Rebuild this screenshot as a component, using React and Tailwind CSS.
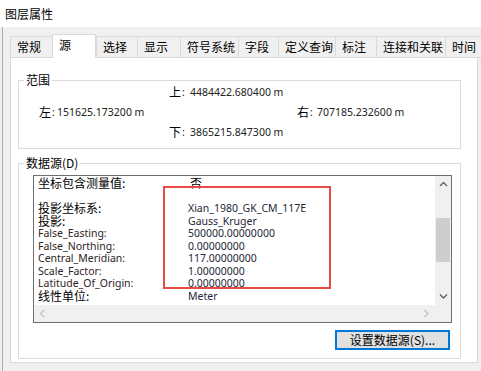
import React from 'react';

const cjk = '"Noto Sans CJK SC", sans-serif';
const tabs = [
  { label: '常规', w: 'w-[42px]' },
  { label: '源', w: 'w-[44px]', active: true },
  { label: '选择', w: 'w-[41px]' },
  { label: '显示', w: 'w-[43px]' },
  { label: '符号系统', w: 'w-[58px]' },
  { label: '字段', w: 'w-[40px]' },
  { label: '定义查询', w: 'w-[57px]' },
  { label: '标注', w: 'w-[41px]' },
  { label: '连接和关联', w: 'w-[69px]' },
  { label: '时间', w: 'w-[40px]' },
];

const rows = [
  { k: '坐标包含测量值:', v: '否', cn: true, vcn: true },
  { k: '', v: '' },
  { k: '投影坐标系:', v: 'Xian_1980_GK_CM_117E', cn: true },
  { k: '投影:', v: 'Gauss_Kruger', cn: true },
  { k: 'False_Easting:', v: '500000.00000000' },
  { k: 'False_Northing:', v: '0.00000000' },
  { k: 'Central_Meridian:', v: '117.00000000' },
  { k: 'Scale_Factor:', v: '1.00000000' },
  { k: 'Latitude_Of_Origin:', v: '0.00000000' },
  { k: '线性单位:', v: 'Meter', cn: true },
];

function Chevron({ dir, color }) {
  const d = {
    up: 'M1 5 L4.5 1.5 L8 5',
    down: 'M1 1.5 L4.5 5 L8 1.5',
    left: 'M5 1 L1.5 4.5 L5 8',
    right: 'M1.5 1 L5 4.5 L1.5 8',
  }[dir];
  const vert = dir === 'up' || dir === 'down';
  return (
    <svg width={vert ? 9 : 7} height={vert ? 7 : 9} viewBox={vert ? '0 0 9 7' : '0 0 7 9'}>
      <path d={d} fill="none" stroke={color} strokeWidth="1.3" />
    </svg>
  );
}

function Coord({ label, value, lw }) {
  return (
    <div className="flex items-center leading-none">
      <span className={`flex items-center ${lw}`}>
        <span className="text-[12px] leading-none text-black" style={{ fontFamily: cjk }}>{label}</span>
        <span className="text-[10.5px] leading-none text-[#222] ml-[1px]">:</span>
      </span>
      <span className="text-[10.5px] leading-none text-[#222]">{value}</span>
    </div>
  );
}

export default function App() {
  return (
    <div
      className="w-[481px] h-[371px] bg-[#f0f0f0] overflow-hidden"
      style={{ fontFamily: '"Noto Sans", "Noto Sans CJK SC", sans-serif' }}
    >
      <div className="h-[27px] bg-white pl-[5px] pt-[1px] flex items-center">
        <span className="text-[12px] text-black" style={{ fontFamily: cjk }}>图层属性</span>
      </div>

      <div className="ml-[2px] h-[344px] border-l border-[#ababab] pl-[7px]">
        <div className="flex items-end h-[31px] -mb-px relative z-10">
          {tabs.map((t) =>
            t.active ? (
              <div
                key={t.label}
                className={`${t.w} h-[24px] shrink-0 bg-white border-t border-x border-[#d9d9d9] pl-[6px] pb-[3px] flex items-center text-[12px] text-black`}
                style={{ fontFamily: cjk }}
              >
                {t.label}
              </div>
            ) : (
              <div
                key={t.label}
                className={`${t.w} h-[22px] shrink-0 bg-[#f0f0f0] border-t border-l border-b border-[#d9d9d9] pl-[6px] flex items-center text-[12px] text-black`}
                style={{ fontFamily: cjk }}
              >
                {t.label}
              </div>
            )
          )}
        </div>

        <div className="w-[468px] h-[306px] bg-white border border-[#d9d9d9] pl-[7px] pt-[22px]">
          {/* 范围 */}
          <div className="relative w-[443px] h-[69px] border border-[#dcdcdc] pt-[1px]">
            <span
              className="absolute left-[5px] -top-[10px] bg-white px-[2px] text-[12px] text-black"
              style={{ fontFamily: cjk }}
            >
              范围
            </span>
            <div className="h-[20px] pl-[150px] flex items-center">
              <Coord label="上" value="4484422.680400 m" lw="w-[21px]" />
            </div>
            <div className="h-[20px] pl-[20px] flex items-center">
              <div className="w-[258px]">
                <Coord label="左" value="151625.173200 m" lw="w-[18px]" />
              </div>
              <Coord label="右" value="707185.232600 m" lw="w-[20px]" />
            </div>
            <div className="h-[20px] pl-[150px] flex items-center">
              <Coord label="下" value="3865215.847300 m" lw="w-[21px]" />
            </div>
          </div>

          {/* 数据源 */}
          <div className="relative mt-[14px] w-[443px] h-[196px] border border-[#dcdcdc] pl-[14px] pt-[11px]">
            <span
              className="absolute left-[5px] -top-[10px] bg-white px-[2px] text-[12px] text-black"
              style={{ fontFamily: cjk }}
            >
              数据源(D)
            </span>

            <div className="w-[419px]">
              <div className="w-[419px] h-[148px] border border-[#6e6e6e] grid grid-cols-[1fr_16px] grid-rows-[1fr_17px]">
                <div className="relative overflow-hidden pt-[1px]">
                  {rows.map((r, i) => (
                    <div key={i} className="h-[12.5px] flex items-center whitespace-nowrap leading-[12px]">
                      <span
                        className={`pl-[4px] w-[154px] shrink-0 ${r.cn ? 'text-[12px] text-black' : 'text-[10.5px] text-[#2e2424]'}`}
                        style={r.cn ? { fontFamily: cjk } : undefined}
                      >
                        {r.k}
                      </span>
                      <span
                        className={r.vcn ? 'text-[12px] text-black pl-[2px]' : 'text-[10.5px] text-[#242838]'}
                        style={r.vcn ? { fontFamily: cjk } : undefined}
                      >
                        {r.v}
                      </span>
                    </div>
                  ))}
                  <div className="absolute left-[129px] top-[10px] w-[168px] h-[103px] border-2 border-[#e84a45]" />
                </div>

                <div className="bg-[#f0f0f0] flex flex-col items-center">
                  <div className="h-[17px] flex items-center justify-center">
                    <Chevron dir="up" color="#606060" />
                  </div>
                  <div className="flex-1 w-full px-[1px] pt-[25px]">
                    <div className="h-[44px] bg-[#cdcdcd]" />
                  </div>
                  <div className="h-[17px] flex items-center justify-center">
                    <Chevron dir="down" color="#606060" />
                  </div>
                </div>

                <div className="bg-[#f0f0f0] flex items-center justify-between px-[5px]">
                  <Chevron dir="left" color="#c2c2c2" />
                  <Chevron dir="right" color="#c2c2c2" />
                </div>
                <div className="bg-[#f0f0f0]" />
              </div>

              <div className="flex justify-end pr-[2px] mt-[7px]">
                <button
                  className="w-[115px] h-[20px] bg-[#e1e1e1] border-2 border-[#0078d7] flex items-center justify-center text-[12px] text-black"
                  style={{ fontFamily: cjk }}
                >
                  设置数据源(S)...
                </button>
              </div>
            </div>
          </div>
        </div>
      </div>
    </div>
  );
}
